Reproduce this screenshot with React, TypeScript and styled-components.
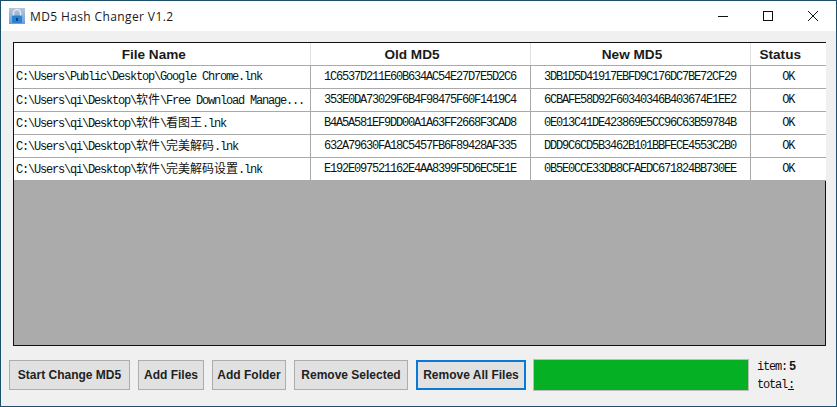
import styled, { createGlobalStyle } from "styled-components";

const GlobalStyle = createGlobalStyle`
    html, body {
        margin: 0;
        padding: 0;
        background: #f0f0f0;
    }
`;

const Win = styled.div`
    width: 837px;
    height: 407px;
    box-sizing: border-box;
    border: 1px solid #1c4f69;
    background: #f0f0f0;
    display: flex;
    flex-direction: column;
    overflow: hidden;
`;

const TitleBar = styled.div`
    height: 30px;
    flex: none;
    background: #fff;
    display: flex;
    align-items: center;
    padding-left: 8px;
`;

const Title = styled.span`
    margin-left: 5px;
    font-family: "Open Sans", "Noto Sans", sans-serif;
    font-size: 12px;
    letter-spacing: 0.38px;
    color: #1a1a1a;
`;

const WinControls = styled.div`
    margin-left: auto;
    padding-right: 1px;
    display: flex;
    align-items: center;
`;

const WinBtn = styled.div`
    width: 45px;
    height: 30px;
    display: flex;
    align-items: center;
    justify-content: center;
`;

const Body = styled.div`
    flex: 1;
    display: flex;
    flex-direction: column;
    padding: 11px 10px 0 12px;
`;

const GridBox = styled.div`
    height: 304px;
    box-sizing: border-box;
    border: 1px solid #111;
    background: #ababab;
`;

const Table = styled.table`
    width: 812px;
    table-layout: fixed;
    border-collapse: collapse;
    background: #fff;
`;

const Head = styled.th<{ $w: number }>`
    width: ${(p) => p.$w}px;
    height: 22px;
    padding: 3px 16px 0 0;
    box-sizing: border-box;
    border-right: 1px solid #e2e2e2;
    border-bottom: 1px solid #a9a9a9;
    font-family: "Liberation Sans", Arial, sans-serif;
    font-size: 13.6px;
    line-height: 16px;
    font-weight: bold;
    color: #1a1a1a;
    text-align: center;
    &:last-child {
        border-right: none;
    }
`;

const Cell = styled.td<{ $left?: boolean }>`
    height: 23px;
    padding: 1px 0 0 ${(p) => (p.$left ? "2px" : "0")};
    box-sizing: border-box;
    border-right: 1px solid #a9a9a9;
    border-bottom: 1px solid #a9a9a9;
    font-family: "Liberation Mono", monospace;
    font-size: 12px;
    line-height: 14px;
    letter-spacing: -1.2px;
    color: #111;
    text-align: ${(p) => (p.$left ? "left" : "center")};
    white-space: nowrap;
    overflow: hidden;
    &:last-child {
        border-right: none;
    }
`;

const Cjk = styled.span`
    font-family: "Noto Sans CJK SC", sans-serif;
    font-size: 12px;
    line-height: 12px;
    letter-spacing: 0;
`;

const Footer = styled.div`
    display: flex;
    align-items: center;
    height: 32px;
    margin: 13px 0 0 -4px;
`;

const Button = styled.div<{ $w: number; $active?: boolean }>`
    width: ${(p) => p.$w}px;
    height: 30px;
    margin-right: 8px;
    box-sizing: border-box;
    border: ${(p) => (p.$active ? "2px solid #0a78d4" : "1px solid #adadad")};
    background: #e1e1e1;
    display: flex;
    align-items: center;
    justify-content: center;
    font-family: "Liberation Sans", Arial, sans-serif;
    font-size: 12px;
    font-weight: bold;
    color: #222;
`;

const Progress = styled.div`
    width: 216px;
    height: 32px;
    margin-left: -1px;
    box-sizing: border-box;
    border: 1px solid #bcbcbc;
    background: #06b025;
`;

const Stats = styled.div`
    align-self: flex-start;
    margin: 2px 0 0 8px;
    display: flex;
    flex-direction: column;
    gap: 6px;
    font-family: "Liberation Mono", monospace;
    font-size: 12px;
    letter-spacing: -1.2px;
    line-height: 12px;
    color: #111;
`;

const Value = styled.b`
    margin-left: 2px;
`;

const Blank = styled.span`
    margin-left: 1px;
    text-decoration: underline;
`;

const LockIcon = () => (
    <svg width="16" height="16" viewBox="0 0 16 16">
        <defs>
            <linearGradient id="lockBg" x1="0" y1="0" x2="0" y2="1">
                <stop offset="0" stopColor="#b7c6d8" />
                <stop offset="1" stopColor="#6d9fd8" />
            </linearGradient>
        </defs>
        <rect x="0" y="0" width="16" height="16" fill="url(#lockBg)" />
        <path d="M4.5 8V5a3.5 3.5 0 0 1 7 0v3" fill="none" stroke="#e4e8ec" strokeWidth="1.6" />
        <rect x="3" y="7.5" width="10" height="7.5" rx="1" fill="#2a82d2" />
        <rect x="7" y="10" width="2" height="3" fill="#0c3f78" />
    </svg>
);

const MinIcon = () => (
    <svg width="10" height="10" viewBox="0 0 10 10">
        <path d="M0 5.5H10" stroke="#111" strokeWidth="1" />
    </svg>
);

const MaxIcon = () => (
    <svg width="10" height="10" viewBox="0 0 10 10">
        <rect x="0.5" y="0.5" width="9" height="9" fill="none" stroke="#111" strokeWidth="1" />
    </svg>
);

const CloseIcon = () => (
    <svg width="10" height="10" viewBox="0 0 10 10">
        <path d="M0 0L10 10M10 0L0 10" stroke="#111" strokeWidth="1" />
    </svg>
);

const prefix = "C:\\Users\\qi\\Desktop\\";

const rows = [
    {
        file: <>C:\Users\Public\Desktop\Google Chrome.lnk</>,
        oldMd5: "1C6537D211E60B634AC54E27D7E5D2C6",
        newMd5: "3DB1D5D41917EBFD9C176DC7BE72CF29",
    },
    {
        file: <>{prefix}<Cjk>软件</Cjk>\Free Download Manage...</>,
        oldMd5: "353E0DA73029F6B4F98475F60F1419C4",
        newMd5: "6CBAFE58D92F60340346B403674E1EE2",
    },
    {
        file: <>{prefix}<Cjk>软件</Cjk>\<Cjk>看图王</Cjk>.lnk</>,
        oldMd5: "B4A5A581EF9DD00A1A63FF2668F3CAD8",
        newMd5: "0E013C41DE423869E5CC96C63B59784B",
    },
    {
        file: <>{prefix}<Cjk>软件</Cjk>\<Cjk>完美解码</Cjk>.lnk</>,
        oldMd5: "632A79630FA18C5457FB6F89428AF335",
        newMd5: "DDD9C6CD5B3462B101BBFECE4553C2B0",
    },
    {
        file: <>{prefix}<Cjk>软件</Cjk>\<Cjk>完美解码设置</Cjk>.lnk</>,
        oldMd5: "E192E097521162E4AA8399F5D6EC5E1E",
        newMd5: "0B5E0CCE33DB8CFAEDC671824BB730EE",
    },
];

const App = () => {
    return (
        <>
            <GlobalStyle />
            <Win>
                <TitleBar>
                    <LockIcon />
                    <Title>MD5 Hash Changer V1.2</Title>
                    <WinControls>
                        <WinBtn><MinIcon /></WinBtn>
                        <WinBtn><MaxIcon /></WinBtn>
                        <WinBtn><CloseIcon /></WinBtn>
                    </WinControls>
                </TitleBar>
                <Body>
                    <GridBox>
                        <Table>
                            <thead>
                                <tr>
                                    <Head $w={296}>File Name</Head>
                                    <Head $w={220}>Old MD5</Head>
                                    <Head $w={220}>New MD5</Head>
                                    <Head $w={76}>Status</Head>
                                </tr>
                            </thead>
                            <tbody>
                                {rows.map((r) => (
                                    <tr key={r.oldMd5}>
                                        <Cell $left>{r.file}</Cell>
                                        <Cell>{r.oldMd5}</Cell>
                                        <Cell>{r.newMd5}</Cell>
                                        <Cell>OK</Cell>
                                    </tr>
                                ))}
                            </tbody>
                        </Table>
                    </GridBox>
                    <Footer>
                        <Button $w={121}>Start Change MD5</Button>
                        <Button $w={66}>Add Files</Button>
                        <Button $w={74}>Add Folder</Button>
                        <Button $w={114}>Remove Selected</Button>
                        <Button $w={110} $active>Remove All Files</Button>
                        <Progress />
                        <Stats>
                            <div>item:<Value>5</Value></div>
                            <div>total<Blank>:</Blank></div>
                        </Stats>
                    </Footer>
                </Body>
            </Win>
        </>
    );
};

export default App;
